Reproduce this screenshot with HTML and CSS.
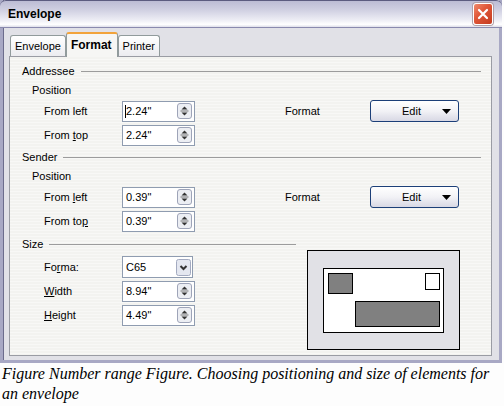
FILE: index.html
```html
<!DOCTYPE html>
<html lang="en">
<head>
    <meta charset="UTF-8">
    <title>Envelope</title>
    <link rel="stylesheet" href="styles.css">
</head>
<body>

    <div class="window">
        <div class="titlebar">
            <span class="title">Envelope</span>
            <span class="close-btn">
                <svg width="18" height="20" viewBox="0 0 18 20"><path d="M5 6 L13 14 M13 6 L5 14" stroke="#fff" stroke-width="2.2" stroke-linecap="round"/></svg>
            </span>
        </div>
        <div class="client">
            <div class="tabs">
                <div class="tab">Envelope</div>
                <div class="tab active">Format</div>
                <div class="tab">Printer</div>
            </div>
            <div class="panel">
                <div class="group-head first"><span>Addressee</span><i class="rule"></i></div>
                <div class="sub-head">Position</div>
                <div class="row">
                    <span class="label">From left</span>
                    <div class="field"><span class="caret"></span><span class="value">2.24"</span><svg class="spin" width="15" height="16" viewBox="0 0 15 16"><rect x="0.5" y="0.5" width="14" height="15" rx="2.5" fill="#eceef3" stroke="#9ea4b8"/><path d="M4.5 6.5 L7.5 3.5 L10.5 6.5Z" fill="#333"/><line x1="3.5" y1="8" x2="11.5" y2="8" stroke="#777"/><path d="M4.5 9.5 L7.5 12.5 L10.5 9.5Z" fill="#333"/></svg></div>
                    <span class="fmt-label">Format</span>
                    <button class="edit-btn"><span class="edit-text">Edit</span><svg width="9" height="5" viewBox="0 0 9 5"><path d="M0 0 H9 L4.5 5Z" fill="#000"/></svg></button>
                </div>
                <div class="row">
                    <span class="label">From <u>t</u>op</span>
                    <div class="field"><span class="value">2.24"</span><svg class="spin" width="15" height="16" viewBox="0 0 15 16"><rect x="0.5" y="0.5" width="14" height="15" rx="2.5" fill="#eceef3" stroke="#9ea4b8"/><path d="M4.5 6.5 L7.5 3.5 L10.5 6.5Z" fill="#333"/><line x1="3.5" y1="8" x2="11.5" y2="8" stroke="#777"/><path d="M4.5 9.5 L7.5 12.5 L10.5 9.5Z" fill="#333"/></svg></div>
                </div>

                <div class="group-head sender"><span>Sender</span><i class="rule"></i></div>
                <div class="sub-head">Position</div>
                <div class="row">
                    <span class="label">From <u>l</u>eft</span>
                    <div class="field"><span class="value">0.39"</span><svg class="spin" width="15" height="16" viewBox="0 0 15 16"><rect x="0.5" y="0.5" width="14" height="15" rx="2.5" fill="#eceef3" stroke="#9ea4b8"/><path d="M4.5 6.5 L7.5 3.5 L10.5 6.5Z" fill="#333"/><line x1="3.5" y1="8" x2="11.5" y2="8" stroke="#777"/><path d="M4.5 9.5 L7.5 12.5 L10.5 9.5Z" fill="#333"/></svg></div>
                    <span class="fmt-label">Format</span>
                    <button class="edit-btn"><span class="edit-text">Edit</span><svg width="9" height="5" viewBox="0 0 9 5"><path d="M0 0 H9 L4.5 5Z" fill="#000"/></svg></button>
                </div>
                <div class="row">
                    <span class="label">From to<u>p</u></span>
                    <div class="field"><span class="value">0.39"</span><svg class="spin" width="15" height="16" viewBox="0 0 15 16"><rect x="0.5" y="0.5" width="14" height="15" rx="2.5" fill="#eceef3" stroke="#9ea4b8"/><path d="M4.5 6.5 L7.5 3.5 L10.5 6.5Z" fill="#333"/><line x1="3.5" y1="8" x2="11.5" y2="8" stroke="#777"/><path d="M4.5 9.5 L7.5 12.5 L10.5 9.5Z" fill="#333"/></svg></div>
                </div>

                <div class="size-section">
                    <div class="size-fields">
                        <div class="group-head"><span>Size</span><i class="rule"></i></div>
                        <div class="row">
                            <span class="label">Fo<u>r</u>ma:</span>
                            <div class="field select"><span class="value">C65</span><svg class="spin" width="15" height="17" viewBox="0 0 15 17"><rect x="0.5" y="0.5" width="14" height="16" rx="2" fill="#e4e7f0" stroke="#a3aac0"/><path d="M4.5 7 L7.5 10 L10.5 7" fill="none" stroke="#333" stroke-width="2"/></svg></div>
                        </div>
                        <div class="row">
                            <span class="label"><u>W</u>idth</span>
                            <div class="field"><span class="value">8.94"</span><svg class="spin" width="15" height="16" viewBox="0 0 15 16"><rect x="0.5" y="0.5" width="14" height="15" rx="2.5" fill="#eceef3" stroke="#9ea4b8"/><path d="M4.5 6.5 L7.5 3.5 L10.5 6.5Z" fill="#333"/><line x1="3.5" y1="8" x2="11.5" y2="8" stroke="#777"/><path d="M4.5 9.5 L7.5 12.5 L10.5 9.5Z" fill="#333"/></svg></div>
                        </div>
                        <div class="row">
                            <span class="label"><u>H</u>eight</span>
                            <div class="field"><span class="value">4.49"</span><svg class="spin" width="15" height="16" viewBox="0 0 15 16"><rect x="0.5" y="0.5" width="14" height="15" rx="2.5" fill="#eceef3" stroke="#9ea4b8"/><path d="M4.5 6.5 L7.5 3.5 L10.5 6.5Z" fill="#333"/><line x1="3.5" y1="8" x2="11.5" y2="8" stroke="#777"/><path d="M4.5 9.5 L7.5 12.5 L10.5 9.5Z" fill="#333"/></svg></div>
                        </div>
                    </div>
                    <div class="preview">
                        <div class="envelope">
                            <div class="env-top">
                                <div class="sender-box"></div>
                                <div class="stamp"></div>
                            </div>
                            <div class="addressee-box"></div>
                        </div>
                    </div>
                </div>
            </div>
        </div>
    </div>

    <p class="caption">Figure Number range Figure. Choosing positioning and size of elements for an envelope</p>

</body>
</html>
```

FILE: styles.css
```css
:root {
    --ui-font: "Liberation Sans", Arial, sans-serif;
    --frame: #a8a8c4;
    --client-bg: #e1e1e7;
    --panel-border: #9a9ca4;
    --field-border: #8f9cb0;
}

body {
    margin: 0;
    background: #fdfdfd;
    font-family: var(--ui-font);
    font-size: 11px;
    color: #000;
}

.window {
    width: 496px;
    border-left: 3px solid var(--frame);
    border-right: 3px solid var(--frame);
    border-bottom: 3px solid var(--frame);
    box-shadow: inset 1px 0 0 #6c6c8c;
    background: var(--client-bg);
}

.titlebar {
    height: 26px;
    margin-left: -3px;
    margin-right: -3px;
    border-top: 1px solid #5c5c80;
    border-bottom: 1px solid #8a8aae;
    border-radius: 6px 6px 0 0;
    background: linear-gradient(#bcbcd4 0, #d0d0e2 35%, #ececf4 72%, #ffffff 90%, #dedee9 100%);
    display: flex;
    align-items: center;
    justify-content: space-between;
    padding: 0 8px 0 8px;
}

.title {
    font-weight: 700;
    font-size: 12px;
}

.close-btn {
    width: 18px;
    height: 20px;
    border-radius: 3px;
    border: 1px solid #fff;
    box-shadow: 0 0 0 1px #b0a0a8;
    background: linear-gradient(135deg, #f08a6c 0, #e0583a 40%, #c43a1e 100%);
    display: flex;
    margin-right: 1px;
}

.client {
    padding: 4px 7px 4px 6px;
}

.tabs {
    display: flex;
    align-items: flex-end;
    height: 24px;
    padding-left: 1px;
}

.tab {
    height: 20px;
    line-height: 20px;
    padding: 0 4px;
    border: 1px solid #919b9c;
    border-bottom: none;
    border-radius: 3px 3px 0 0;
    background: linear-gradient(#ffffff, #ececf0);
}
.tab.active {
    height: 23px;
    line-height: 22px;
    font-weight: 700;
    font-size: 12px;
    padding: 0 5px 0 4px;
    border-top: 2px solid #f2a33a;
    background: #f6f6f4;
    margin-bottom: -1px;
    position: relative;
}

.panel {
    height: 300px;
    border: 1px solid var(--panel-border);
    background: repeating-linear-gradient(#f3f3f0 0 2px, #f8f8f6 2px 3px);
    padding-top: 4px;
    box-sizing: border-box;
}

.group-head {
    height: 22px;
    display: flex;
    align-items: center;
    padding-left: 12px;
    margin-right: 10px;
}
.group-head.first,
.group-head.sender { height: 20px; }
.group-head .rule {
    flex: 1;
    margin-left: 6px;
    border-top: 1px solid #9c9c9c;
}

.sub-head {
    height: 18px;
    line-height: 18px;
    padding-left: 22px;
}

.row {
    height: 24px;
    display: flex;
    align-items: center;
}

.label {
    width: 78px;
    padding-left: 34px;
}

.field {
    width: 68px;
    height: 19px;
    border: 1px solid var(--field-border);
    background: #fff;
    display: flex;
    align-items: center;
    padding-left: 3px;
    position: relative;
}
.field .value { flex: 1; }
.field .spin { margin-right: 2px; }
.field.select { width: 66px; height: 20px; }
.field.select .spin { margin-right: 1px; }

.caret {
    position: absolute;
    left: 2px;
    top: 3px;
    width: 1px;
    height: 13px;
    background: #000;
}

.fmt-label {
    width: 85px;
    margin-left: 90px;
}

.edit-btn {
    width: 89px;
    height: 22px;
    padding: 0 7px 0 10px;
    border: 1px solid #1c3f78;
    border-radius: 3px;
    background: linear-gradient(#ffffff 0, #f2f2f6 50%, #d8d8e4 100%);
    font-family: var(--ui-font);
    font-size: 11px;
    display: flex;
    align-items: center;
}
.edit-text { flex: 1; text-align: center; }

.size-section {
    display: flex;
}
.size-fields {
    width: 286px;
}
.size-fields .group-head { margin-right: 0; }

.preview {
    width: 151px;
    height: 98px;
    margin: 17px 0 0 11px;
    border: 1px solid #000;
    background: #e1e1e6;
    display: flex;
    align-items: center;
    justify-content: center;
}

.envelope {
    width: 121px;
    height: 65px;
    border: 1px solid #000;
    background: #fff;
    padding: 4px 3px 4px 4px;
    box-sizing: border-box;
    display: flex;
    flex-direction: column;
    justify-content: space-between;
}

.env-top {
    display: flex;
    justify-content: space-between;
}
.sender-box {
    width: 23px;
    height: 19px;
    border: 1px solid #000;
    background: #808080;
}
.stamp {
    width: 13px;
    height: 15px;
    border: 1px solid #000;
    background: #fff;
}
.addressee-box {
    align-self: flex-end;
    width: 83px;
    height: 24px;
    border: 1px solid #000;
    background: #808080;
    margin-bottom: 1px;
}

.caption {
    margin: 1px 0 0 2px;
    width: 492px;
    font-family: "Liberation Serif", "Times New Roman", serif;
    font-style: italic;
    font-size: 16px;
    line-height: 20px;
    color: #000;
}
```
